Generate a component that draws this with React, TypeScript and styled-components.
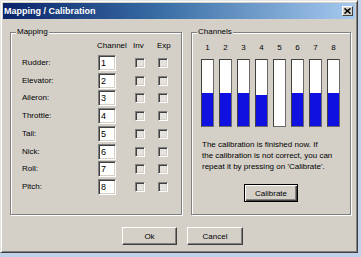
import React from "react";
import styled, { createGlobalStyle } from "styled-components";

const GlobalStyle = createGlobalStyle`
  html, body {
    margin: 0;
    padding: 0;
    background: #bfd2ea;
  }
  body {
    font-family: "Liberation Sans", Arial, sans-serif;
    font-size: 8px;
    color: #000;
  }
`;

const channels = [
  { name: "Rudder:", value: "1" },
  { name: "Elevator:", value: "2" },
  { name: "Aileron:", value: "3" },
  { name: "Throttle:", value: "4" },
  { name: "Tail:", value: "5" },
  { name: "Nick:", value: "6" },
  { name: "Roll:", value: "7" },
  { name: "Pitch:", value: "8" },
];

const levels = [50, 50, 50, 47, 0, 50, 50, 50];

const Window = styled.div`
  width: 358px;
  height: 253px;
  box-sizing: border-box;
  display: flex;
  flex-direction: column;
  padding: 2px;
  background: #d4d0c8;
  border: 1px solid;
  border-color: #e8e6e2 #404040 #404040 #e8e6e2;
  box-shadow: inset 1px 1px 0 #fff, inset -1px -1px 0 #808080;
`;

const TitleBar = styled.div`
  height: 16px;
  display: flex;
  align-items: center;
  justify-content: space-between;
  padding: 0 2px 0 1px;
  background: linear-gradient(to right, #0a246a 0%, #3a6ea5 45%, #a6caf0 100%);
`;

const Title = styled.span`
  color: #fff;
  font-weight: bold;
  font-size: 9px;
  line-height: 16px;
`;

const CloseButton = styled.div`
  width: 11px;
  height: 10px;
  box-sizing: border-box;
  display: flex;
  align-items: center;
  justify-content: center;
  background: #d4d0c8;
  border: 1px solid;
  border-color: #fff #404040 #404040 #fff;
`;

const Body = styled.div`
  display: flex;
  flex-direction: column;
  padding: 13px 3px 0 7px;
`;

const GroupRow = styled.div`
  display: flex;
  gap: 9px;
`;

const Group = styled.div<{ $width: number }>`
  position: relative;
  width: ${({ $width }) => $width}px;
  height: 183px;
  box-sizing: border-box;
  border: 1px solid #808080;
  box-shadow: 1px 1px 0 #fff, inset 1px 1px 0 #fff;
`;

const Caption = styled.span`
  position: absolute;
  top: -6px;
  left: 5px;
  padding: 0 1px;
  background: #d4d0c8;
  line-height: 10px;
`;

const MappingGrid = styled.div`
  display: grid;
  grid-template-columns: 76px 37px 23px 23px;
  grid-template-rows: 17px;
  grid-auto-rows: 17.75px;
  align-items: center;
  padding: 4px 0 0 11px;
`;

const HeaderCell = styled.span<{ $shift: number }>`
  margin-left: ${({ $shift }) => $shift}px;
  line-height: 10px;
`;

const RowLabel = styled.span`
  line-height: 10px;
`;

const ChannelInput = styled.div`
  width: 18px;
  height: 16px;
  box-sizing: border-box;
  padding: 2px 0 0 2px;
  background: #fff;
  border: 1px solid;
  border-color: #808080 #fff #fff #808080;
  box-shadow: inset 1px 1px 0 #404040, inset -1px -1px 0 #d4d0c8;
  font-size: 9px;
  line-height: 11px;
`;

const CheckBox = styled.div`
  width: 10px;
  height: 10px;
  box-sizing: border-box;
  background: #e6e3de;
  border: 1px solid;
  border-color: #808080 #fff #fff #808080;
  box-shadow: inset 1px 1px 0 #404040, inset -1px -1px 0 #d4d0c8;
`;

const ChannelsBody = styled.div`
  display: flex;
  flex-direction: column;
  padding: 10px 0 0 9px;
`;

const Bars = styled.div`
  display: flex;
  gap: 5px;
`;

const BarColumn = styled.div`
  width: 13px;
  display: flex;
  flex-direction: column;
  align-items: center;
  gap: 6px;
`;

const BarNumber = styled.span`
  line-height: 10px;
`;

const Bar = styled.div`
  width: 13px;
  height: 68px;
  box-sizing: border-box;
  display: flex;
  flex-direction: column;
  justify-content: flex-end;
  background: #fff;
  border: 1px solid;
  border-color: #404040 #6a6a6a #6a6a6a #404040;
`;

const BarFill = styled.div`
  background: #1010e0;
`;

const Info = styled.p`
  margin: 12px 0 0 1px;
  line-height: 11px;
`;

const Button = styled.div<{ $width: number; $default?: boolean }>`
  width: ${({ $width }) => $width}px;
  height: 18px;
  box-sizing: border-box;
  display: flex;
  align-items: center;
  justify-content: center;
  background: #d4d0c8;
  border: 1px solid;
  border-color: ${({ $default }) =>
    $default ? "#000" : "#fff #404040 #404040 #fff"};
  box-shadow: ${({ $default }) =>
    $default
      ? "inset 1px 1px 0 #fff, inset -1px -1px 0 #404040, inset -2px -2px 0 #808080"
      : "inset -1px -1px 0 #808080"};
  font-size: 8px;
`;

const CalibrateButton = styled(Button)`
  align-self: center;
  margin: 12px 0 0 -9px;
`;

const ButtonRow = styled.div`
  display: flex;
  gap: 10px;
  margin-top: 12px;
  padding-left: 112px;
`;

export default function App() {
  return (
    <>
      <GlobalStyle />
      <Window>
        <TitleBar>
          <Title>Mapping / Calibration</Title>
          <CloseButton>
            <svg width="7" height="6" viewBox="0 0 7 6">
              <path d="M0.5 0.5 L6.5 5.5 M6.5 0.5 L0.5 5.5" stroke="#000" strokeWidth="1.6" />
            </svg>
          </CloseButton>
        </TitleBar>
        <Body>
          <GroupRow>
            <Group $width={172}>
              <Caption>Mapping</Caption>
              <MappingGrid>
                <span />
                <HeaderCell $shift={-1}>Channel</HeaderCell>
                <HeaderCell $shift={-2}>Inv</HeaderCell>
                <HeaderCell $shift={-1}>Exp</HeaderCell>
                {channels.map((c) => (
                  <React.Fragment key={c.name}>
                    <RowLabel>{c.name}</RowLabel>
                    <ChannelInput>{c.value}</ChannelInput>
                    <CheckBox />
                    <CheckBox />
                  </React.Fragment>
                ))}
              </MappingGrid>
            </Group>
            <Group $width={160}>
              <Caption>Channels</Caption>
              <ChannelsBody>
                <Bars>
                  {levels.map((lvl, i) => (
                    <BarColumn key={i}>
                      <BarNumber>{i + 1}</BarNumber>
                      <Bar>
                        <BarFill style={{ height: `${lvl}%` }} />
                      </Bar>
                    </BarColumn>
                  ))}
                </Bars>
                <Info>
                  The calibration is finished now. If
                  <br />
                  the calibration is not correct, you can
                  <br />
                  repeat it by pressing on 'Calibrate'.
                </Info>
                <CalibrateButton $width={54} $default>
                  Calibrate
                </CalibrateButton>
              </ChannelsBody>
            </Group>
          </GroupRow>
          <ButtonRow>
            <Button $width={55}>Ok</Button>
            <Button $width={56}>Cancel</Button>
          </ButtonRow>
        </Body>
      </Window>
    </>
  );
}
